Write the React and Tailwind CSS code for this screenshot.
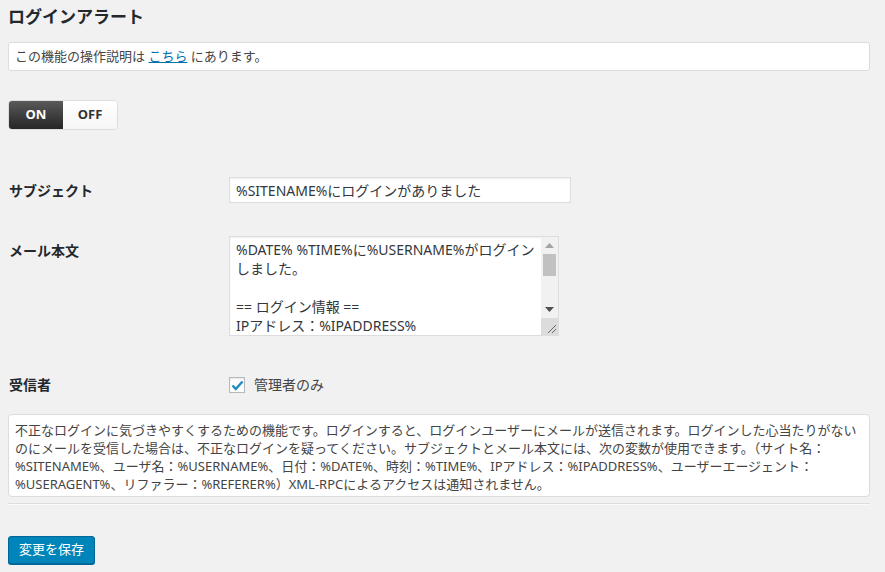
const font = { fontFamily: '"Noto Sans", "Noto Sans CJK JP", sans-serif' };

const Scrollbar = () => {
  return (
    <div className="flex w-[17px] flex-col bg-[#f1f1f1]">
      <div className="flex h-[17px] items-center justify-center">
        <svg width="9" height="5" viewBox="0 0 9 5">
          <path d="M0 5 L4.5 0 L9 5 Z" fill="#a3a3a3" />
        </svg>
      </div>
      <div className="mx-[2px] h-[22px] bg-[#c1c1c1]" />
      <div className="flex-1" />
      <div className="flex h-[17px] items-center justify-center">
        <svg width="9" height="5" viewBox="0 0 9 5">
          <path d="M0 0 L4.5 5 L9 0 Z" fill="#505050" />
        </svg>
      </div>
      <div className="flex h-[17px] items-end justify-end bg-[#dcdcdc] p-[2px]">
        <svg width="9" height="9" viewBox="0 0 9 9">
          <path d="M9 1 L1 9 M9 5 L5 9" stroke="#666" strokeWidth="1" />
        </svg>
      </div>
    </div>
  );
};

const App = () => {
  return (
    <div className="min-h-screen bg-[#f1f1f1] px-2 pt-[5px] text-[#444]" style={font}>
      <h2 className="text-[17px] font-bold leading-[24px] text-[#23282d]">ログインアラート</h2>

      <div className="mt-[13px] w-[862px] rounded-[3px] border border-[#dcdcdc] bg-white px-[6px] py-[4px] text-[13px] leading-[19px]">
        この機能の操作説明は{" "}
        <a href="#" className="text-[#0073aa] underline">
          こちら
        </a>{" "}
        にあります。
      </div>

      <div className="mt-[29px] flex h-[30px] w-[110px] overflow-hidden rounded-[4px] border border-[#ddd] text-[13px] font-bold">
        <div className="flex w-[54px] items-center justify-center bg-gradient-to-b from-[#5a5a5a] to-[#262626] text-white">
          ON
        </div>
        <div className="flex flex-1 items-center justify-center bg-gradient-to-b from-white to-[#f6f6f6] text-[#333]">
          OFF
        </div>
      </div>

      <div className="mt-[47px] flex items-center">
        <div className="w-[221px] pl-[1px] text-[14px] font-bold text-[#23282d]">サブジェクト</div>
        <div className="flex h-[26px] w-[342px] items-center border border-[#ddd] bg-white px-[6px] text-[14px] text-[#32373c] shadow-[inset_0_1px_2px_rgba(0,0,0,0.07)]">
          %SITENAME%にログインがありました
        </div>
      </div>

      <div className="mt-[33px] flex items-start">
        <div className="w-[221px] pl-[1px] pt-[5px] text-[14px] font-bold leading-[20px] text-[#23282d]">
          メール本文
        </div>
        <div className="flex h-[100px] w-[330px] border border-[#ddd] bg-white shadow-[inset_0_1px_2px_rgba(0,0,0,0.07)]">
          <div className="flex-1 overflow-hidden px-[6px] pt-[3px] text-[14px] leading-[19px] text-[#32373c]">
            <div>%DATE% %TIME%に%USERNAME%がログイン</div>
            <div>しました。</div>
            <div className="h-[19px]" />
            <div>== ログイン情報 ==</div>
            <div>IPアドレス：%IPADDRESS%</div>
          </div>
          <Scrollbar />
        </div>
      </div>

      <div className="mt-[41px] flex h-[16px] items-center">
        <div className="w-[221px] pl-[1px] text-[14px] font-bold leading-[20px] text-[#23282d]">受信者</div>
        <label className="flex items-center gap-[9px] text-[14px] leading-[20px] text-[#444]">
          <span className="flex h-[16px] w-[16px] items-center justify-center border border-[#b4b9be] bg-white shadow-[inset_0_1px_2px_rgba(0,0,0,0.1)]">
            <svg width="13" height="11" viewBox="0 0 13 11">
              <path d="M1.5 5.5 L4.8 9 L11.5 1.5" fill="none" stroke="#1e8cbe" strokeWidth="2.4" />
            </svg>
          </span>
          管理者のみ
        </label>
      </div>

      <div className="mt-[21px] w-[862px] rounded-[4px] border border-[#dcdcdc] bg-white px-[6px] pb-[3px] pt-[6px] text-[13px] leading-[18px] text-[#444]">
        不正なログインに気づきやすくするための機能です。ログインすると、ログインユーザーにメールが送信されます。ログインした心当たりがないのにメールを受信した場合は、不正なログインを疑ってください。サブジェクトとメール本文には、次の変数が使用できます。（サイト名：%SITENAME%、ユーザ名：%USERNAME%、日付：%DATE%、時刻：%TIME%、IPアドレス：%IPADDRESS%、ユーザーエージェント：%USERAGENT%、リファラー：%REFERER%）XML-RPCによるアクセスは通知されません。
      </div>

      <div className="mt-[6px] w-[862px] border-t border-b border-t-[#dddddd] border-b-[#fafafa]" />

      <div className="pb-[8px] pt-[31px]">
        <button className="h-[28px] rounded-[3px] border border-[#006799] bg-[#0085ba] px-[10px] text-[13px] text-white shadow-[0_1px_0_#006799]">
          変更を保存
        </button>
      </div>
    </div>
  );
};
export default App;
